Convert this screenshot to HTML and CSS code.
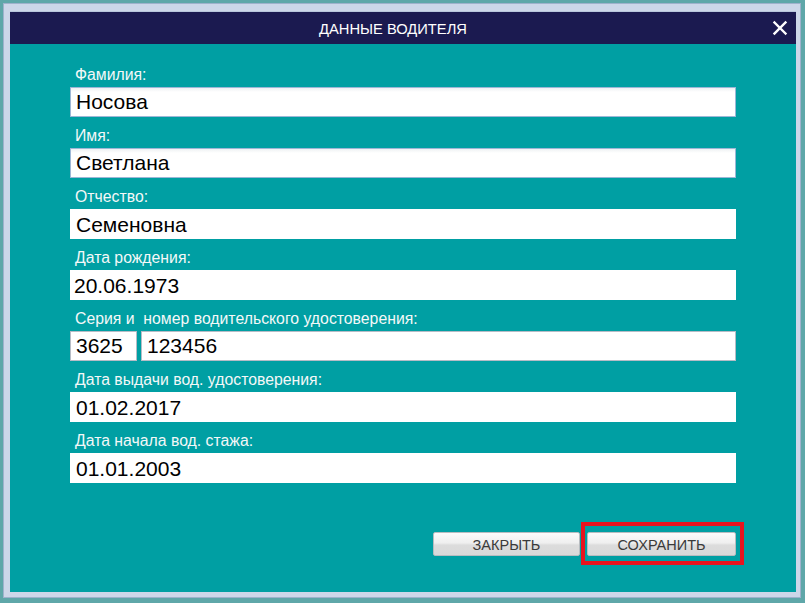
FILE: index.html
```html
<!DOCTYPE html>
<html lang="ru">
<head>
<meta charset="utf-8">
<title>Данные водителя</title>
<link rel="stylesheet" href="styles.css">
</head>
<body>
<div class="window">
  <div class="dialog">
    <div class="titlebar">
      <span class="title">ДАННЫЕ ВОДИТЕЛЯ</span>
      <span class="close">
        <svg width="16" height="16" viewBox="0 0 16 16"><path d="M2.5 2.5 L13.5 13.5 M13.5 2.5 L2.5 13.5" stroke="#fff" stroke-width="2.4" stroke-linecap="square"/></svg>
      </span>
    </div>
    <div class="body">
      <div class="form">
        <div class="row">
          <div class="label">Фамилия:</div>
          <div class="field bordered">Носова</div>
        </div>
        <div class="row">
          <div class="label">Имя:</div>
          <div class="field bordered">Светлана</div>
        </div>
        <div class="row">
          <div class="label">Отчество:</div>
          <div class="field">Семеновна</div>
        </div>
        <div class="row">
          <div class="label">Дата рождения:</div>
          <div class="field tight">20.06.1973</div>
        </div>
        <div class="row">
          <div class="label">Серия и&nbsp; номер водительского удостоверения:</div>
          <div class="pair">
            <div class="field grey series">3625</div>
            <div class="field grey number">123456</div>
          </div>
        </div>
        <div class="row">
          <div class="label">Дата выдачи вод. удостоверения:</div>
          <div class="field">01.02.2017</div>
        </div>
        <div class="row">
          <div class="label">Дата начала вод. стажа:</div>
          <div class="field">01.01.2003</div>
        </div>
      </div>
      <div class="footer">
        <button class="btn btn-close">ЗАКРЫТЬ</button>
        <div class="highlight">
          <button class="btn btn-save">СОХРАНИТЬ</button>
        </div>
      </div>
    </div>
  </div>
</div>
</body>
</html>
```

FILE: styles.css
```css
html, body {
  margin: 0;
  padding: 0;
}
body {
  width: 805px;
  height: 603px;
  background: #5fa7a9;
  font-family: "Liberation Sans", Arial, sans-serif;
  overflow: hidden;
}
.window {
  box-sizing: border-box;
  margin: 3px 0 0 3px;
  width: 798px;
  height: 595px;
  border: 1px solid #9fb2cc;
  background: #cdd7e9;
  padding: 7px 4px 6px 6px;
}
.dialog {
  height: 100%;
  display: flex;
  flex-direction: column;
  border-top: 1px solid #b9c6dc;
}
.titlebar {
  height: 32px;
  background: #1b1a50;
  display: flex;
  align-items: center;
  justify-content: center;
  position: relative;
  padding-right: 20px;
}
.title {
  color: #ffffff;
  font-size: 14.7px;
  padding-top: 2px;
}
.close {
  position: absolute;
  right: 8px;
  top: 8px;
  width: 16px;
  height: 16px;
}
.close svg {
  display: block;
}
.body {
  flex: 1;
  background: #009fa3;
  display: flex;
  flex-direction: column;
}
.form {
  padding: 22px 0 0 60px;
  width: 666px;
}
.row {
  margin-bottom: 10px;
}
.label {
  color: #f4f8f8;
  font-size: 15.8px;
  line-height: 17px;
  height: 21px;
  padding-left: 5px;
  white-space: nowrap;
}
.field {
  box-sizing: border-box;
  height: 30px;
  background: #ffffff;
  border: 1px solid #ffffff;
  font-size: 21px;
  line-height: 30px;
  color: #000;
  padding-left: 5px;
}
.field.bordered {
  border-color: #9db7d6;
  background: linear-gradient(#eef1f3, #ffffff 4px);
  line-height: 28px;
}
.field.tight {
  padding-left: 3px;
}
.field.grey {
  border-color: #b6bcc6;
  line-height: 28px;
}
.pair {
  display: flex;
  gap: 4px;
}
.series {
  width: 67px;
}
.number {
  flex: 1;
}
.footer {
  margin-top: auto;
  margin-bottom: 27px;
  display: flex;
  justify-content: flex-end;
  align-items: center;
  padding-right: 52px;
}
.btn {
  box-sizing: border-box;
  height: 24px;
  border: 1px solid #b8bcc0;
  border-radius: 2px;
  background: linear-gradient(#fbfbfb 0%, #efefef 45%, #dcdcdc 55%, #d9d9d9 100%);
  font-family: "Liberation Sans", Arial, sans-serif;
  font-size: 14.5px;
  color: #3a3a3a;
  padding: 2px 0 0;
}
.btn-close {
  width: 147px;
  margin-right: 1px;
}
.btn-save {
  width: 149px;
}
.highlight {
  box-sizing: border-box;
  height: 43px;
  border: 4px solid #e8141e;
  padding: 0 4px 0 2px;
  display: flex;
  align-items: center;
}
```
